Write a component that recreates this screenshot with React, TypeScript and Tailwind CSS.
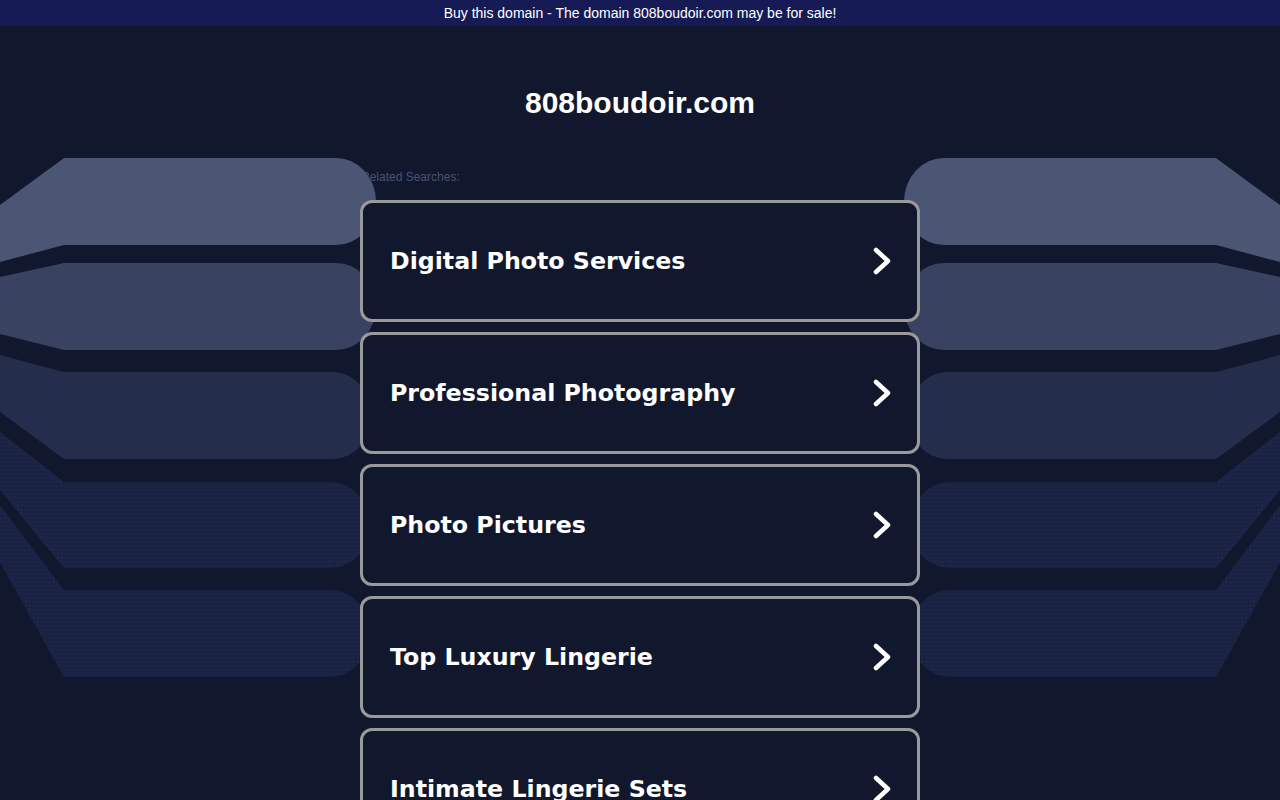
const searches = [
	"Digital Photo Services",
	"Professional Photography",
	"Photo Pictures",
	"Top Luxury Lingerie",
	"Intimate Lingerie Sets",
];

// left-side bands; the right side is the mirror image
const bands = [
	{ top: 158, bottom: 245, y0Top: 205, y0Bottom: 262, end: 376, fill: "#4b5574" },
	{ top: 263, bottom: 350, y0Top: 277, y0Bottom: 334, end: 376, fill: "#394261" },
	{ top: 372, bottom: 459, y0Top: 355, y0Bottom: 412, end: 372, fill: "#252d4c" },
	{ top: 482, bottom: 568, y0Top: 432, y0Bottom: 490, end: 370, fill: "url(#dots4)" },
	{ top: 590, bottom: 677, y0Top: 505, y0Bottom: 562, end: 370, fill: "url(#dots5)" },
];

function bandPath(b: (typeof bands)[number]) {
	const r = (b.bottom - b.top) / 2;
	const cx = b.end - 40;
	return `M0 ${b.y0Top} L64 ${b.top} H${cx} A40 ${r} 0 0 1 ${cx} ${b.bottom} H64 L0 ${b.y0Bottom} Z`;
}

function Backdrop() {
	return (
		<svg
			className="absolute left-0 top-0 w-full h-[800px] pointer-events-none"
			viewBox="0 0 1280 800"
			preserveAspectRatio="none"
		>
			<defs>
				<pattern id="dots4" width="4" height="4" patternUnits="userSpaceOnUse">
					<rect width="4" height="4" fill="#1b2344" />
					<rect x="1" y="1" width="1" height="1" fill="#263058" />
				</pattern>
				<pattern id="dots5" width="4" height="4" patternUnits="userSpaceOnUse">
					<rect width="4" height="4" fill="#1a2244" />
					<rect x="1" y="1" width="1" height="1" fill="#252f57" />
				</pattern>
			</defs>
			<g>
				{bands.map((b, i) => (
					<path key={i} d={bandPath(b)} fill={b.fill} />
				))}
			</g>
			<g transform="translate(1280,0) scale(-1,1)">
				{bands.map((b, i) => (
					<path key={i} d={bandPath(b)} fill={b.fill} />
				))}
			</g>
		</svg>
	);
}

function Chevron() {
	return (
		<svg width="22" height="28" viewBox="0 0 22 28" fill="none">
			<path
				d="M5 3 L17 14 L5 25"
				stroke="#ffffff"
				strokeWidth={4.5}
				strokeLinecap="round"
				strokeLinejoin="round"
			/>
		</svg>
	);
}

export default function App() {
	return (
		<div className="relative min-h-[800px] w-full bg-[#11172d] overflow-hidden">
			<Backdrop />

			{/* Sale banner */}
			<div className="h-[26px] bg-[#161b55] flex items-center justify-center text-white text-[14px] font-['Liberation_Sans',Arial,sans-serif]">
				Buy this domain - The domain 808boudoir.com may be for sale!
			</div>

			<h1 className="pt-[59px] text-center text-white font-bold text-[30px] leading-[36px] font-['Liberation_Sans',Arial,sans-serif]">
				808boudoir.com
			</h1>

			<div className="w-[560px] mx-auto mt-[48px]">
				<div className="h-[16px] leading-[16px] text-[12px] text-[#4a5275] font-['Liberation_Sans',Arial,sans-serif] pl-[1px]">
					Related Searches:
				</div>

				<div className="relative flex flex-col gap-[10px] mt-[15px]">
					{searches.map((s) => (
						<a
							key={s}
							href="#"
							className="h-[122px] flex items-center justify-between pl-[27px] pr-[24px] bg-[#11172d] border-[3px] border-[#9a9a9a] rounded-[12px] text-white font-bold text-[23.7px] font-['DejaVu_Sans',Verdana,sans-serif]"
						>
							<span className="pt-[2px]">{s}</span>
							<Chevron />
						</a>
					))}
				</div>
			</div>
		</div>
	);
}
